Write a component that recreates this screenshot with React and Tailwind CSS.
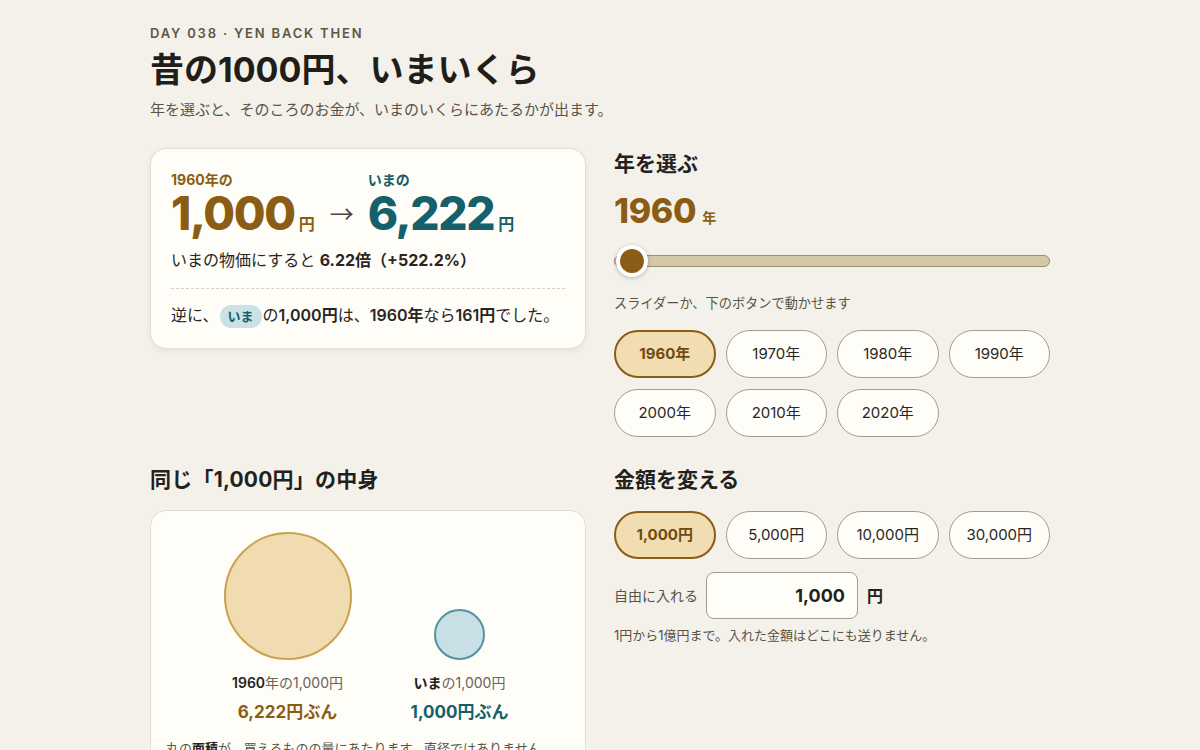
import { useState } from 'react';

const YEARS = [1960, 1970, 1980, 1990, 2000, 2010, 2020];
const AMOUNTS = [1000, 5000, 10000, 30000];

const fmt = (n) => n.toLocaleString('en-US');

function Pill({ active, children, onClick }) {
  return (
    <button
      onClick={onClick}
      className={`h-[48px] rounded-full text-[15px] ${
        active
          ? 'bg-[#f2dcb1] border-2 border-[#8b5d14] text-[#6f4a0e] font-bold'
          : 'bg-[#fefdf8] border border-[#a49d8e] text-[#2a261f]'
      }`}
    >
      {children}
    </button>
  );
}

export default function App() {
  const [year, setYear] = useState(1960);
  const [amount, setAmount] = useState(1000);
  const ratio = 6.222;
  const now = Math.round(amount * ratio);

  return (
    <div
      className="min-h-screen bg-[#f4f1ea] text-[#24211c]"
      style={{ fontFamily: 'Inter, "Noto Sans CJK JP", sans-serif' }}
    >
      <div className="w-[900px] mx-auto pt-[24px] pb-10">
        <p className="text-[13px] leading-[18px] font-semibold tracking-[0.14em] text-[#5e5746]">
          DAY 038 · YEN BACK THEN
        </p>
        <h1 className="mt-[6px] text-[34px] leading-[44px] font-bold text-[#211e19]">
          昔の1000円、いまいくら
        </h1>
        <p className="mt-[8px] text-[15px] leading-[20px] text-[#5a5346]">
          年を選ぶと、そのころのお金が、いまのいくらにあたるかが出ます。
        </p>

        <div className="mt-[28px] grid grid-cols-2 gap-x-7 gap-y-[29px] items-start">
          {/* result card */}
          <div className="bg-[#fefdf8] border border-[#e3ddcf] rounded-2xl shadow-[0_2px_6px_rgba(80,60,20,0.08)] px-5 pt-[21px] pb-[20px]">
            <div className="flex items-end">
              <div>
                <div className="text-[14px] leading-[20px] font-bold text-[#8b5d14]">{year}年の</div>
                <div className="flex items-baseline text-[#8b5d14] font-extrabold">
                  <span className="text-[46px] leading-[46px] tracking-[-0.03em]">{fmt(amount)}</span>
                  <span className="ml-[4px] text-[16px] font-bold">円</span>
                </div>
              </div>
              <div
                className="ml-[15px] mr-[14px] mb-[8px] text-[24px] leading-[30px] text-[#4b463d]"
                style={{ fontFamily: '"Noto Sans CJK JP", sans-serif' }}
              >
                →
              </div>
              <div>
                <div className="text-[14px] leading-[20px] font-bold text-[#15606a]">いまの</div>
                <div className="flex items-baseline text-[#15606a] font-extrabold">
                  <span className="text-[46px] leading-[46px] tracking-[-0.03em]">{fmt(now)}</span>
                  <span className="ml-[4px] text-[16px] font-bold">円</span>
                </div>
              </div>
            </div>
            <p className="mt-[14px] text-[16px] leading-[20px] text-[#2a261f]">
              いまの物価にすると <span className="font-bold">6.22倍（+522.2%）</span>
            </p>
            <div className="mt-[18px] border-t border-dashed border-[#d9d1c0]" />
            <p className="pt-[14px] text-[16px] leading-[24px] text-[#2a261f]">
              逆に、
              <span className="inline-block mx-[1px] px-[8px] rounded-full bg-[#c9e1e7] text-[#15606a] text-[13px] leading-[23px] font-bold align-middle">
                いま
              </span>
              の<span className="font-semibold">{fmt(amount)}円</span>は、
              <span className="font-semibold">{year}年</span>なら
              <span className="font-semibold">161円</span>でした。
            </p>
          </div>

          {/* year picker */}
          <div className="pt-[2px]">
            <h2 className="text-[21px] leading-[28px] font-bold">年を選ぶ</h2>
            <div className="mt-[13px] flex items-baseline text-[#8b5d14] font-extrabold">
              <span className="text-[34px] leading-[40px] tracking-[-0.01em]">{year}</span>
              <span className="ml-[6px] text-[14px] font-bold">年</span>
            </div>
            <div className="mt-[14px] relative h-8 flex items-center">
              <div className="w-full h-[12px] rounded-full bg-[#d4c8a9] border border-[#9a8e74]" />
              <div
                className="absolute top-0 w-8 h-8 rounded-full bg-[#8b5d14] border-4 border-white shadow-[0_1px_4px_rgba(0,0,0,0.25)]"
                style={{ left: `${2 + ((year - 1960) / 60) * 402}px` }}
              />
            </div>
            <p className="mt-[17px] text-[13.2px] leading-[18px] text-[#5a5346]">
              スライダーか、下のボタンで動かせます
            </p>
            <div className="mt-[18px] grid grid-cols-4 gap-x-2.5 gap-y-[11px]">
              {YEARS.map((y) => (
                <Pill key={y} active={y === year} onClick={() => setYear(y)}>
                  {y}年
                </Pill>
              ))}
            </div>
          </div>

          {/* circles */}
          <div>
            <h2 className="text-[21px] leading-[28px] font-bold tracking-[0.01em]">同じ「1,000円」の中身</h2>
            <div className="mt-[16px] bg-[#fefdf8] border border-[#e3ddcf] rounded-2xl px-[15px] pt-[21px] pb-6">
              <div className="flex justify-center gap-[54px] pr-[7px]">
                <div className="w-[136px] flex flex-col items-center">
                  <div className="h-[128px] flex items-end">
                    <div className="w-[128px] h-[128px] rounded-full bg-[#f1dcb1] border-2 border-[#c9a24e]" />
                  </div>
                  <p className="mt-[13px] text-[14px] leading-[20px] text-[#6a6357] whitespace-nowrap">
                    <span className="font-semibold text-[#24211c]">{year}</span>年の{fmt(amount)}円
                  </p>
                  <p className="mt-[7px] text-[17px] leading-[24px] font-bold text-[#8b5d14] whitespace-nowrap">
                    {fmt(now)}円ぶん
                  </p>
                </div>
                <div className="w-[100px] flex flex-col items-center">
                  <div className="h-[128px] flex items-end">
                    <div className="w-[51px] h-[51px] rounded-full bg-[#c7dfe5] border-2 border-[#4f949f]" />
                  </div>
                  <p className="mt-[13px] text-[14px] leading-[20px] text-[#6a6357] whitespace-nowrap">
                    <span className="font-bold text-[#24211c]">いま</span>の{fmt(amount)}円
                  </p>
                  <p className="mt-[7px] text-[17px] leading-[24px] font-bold text-[#15606a] whitespace-nowrap">
                    {fmt(amount)}円ぶん
                  </p>
                </div>
              </div>
              <p className="mt-[14px] text-[13px] leading-[20px] text-[#5a5346]">
                丸の<span className="font-bold text-[#24211c]">面積</span>が、買えるものの量にあたります。直径ではありません。
              </p>
            </div>
          </div>

          {/* amount picker */}
          <div>
            <h2 className="text-[21px] leading-[28px] font-bold">金額を変える</h2>
            <div className="mt-[17px] grid grid-cols-4 gap-x-2.5">
              {AMOUNTS.map((a) => (
                <Pill key={a} active={a === amount} onClick={() => setAmount(a)}>
                  {fmt(a)}円
                </Pill>
              ))}
            </div>
            <div className="mt-[13px] flex items-center">
              <span className="text-[14px] text-[#5a5346]">自由に入れる</span>
              <input
                value={fmt(amount)}
                onChange={(e) => {
                  const v = parseInt(e.target.value.replace(/[^0-9]/g, ''), 10);
                  if (!isNaN(v)) setAmount(Math.min(100000000, Math.max(1, v)));
                }}
                className="ml-[8px] w-[152px] h-[47px] rounded-lg border border-[#a49d8e] bg-[#fefdf8] text-right pr-[12px] text-[18px] font-bold text-[#24211c] outline-none"
              />
              <span className="ml-[9px] text-[16px] font-bold">円</span>
            </div>
            <p className="mt-[7px] text-[13px] leading-[18px] text-[#5a5346]">
              1円から1億円まで。入れた金額はどこにも送りません。
            </p>
          </div>
        </div>
      </div>
    </div>
  );
}
